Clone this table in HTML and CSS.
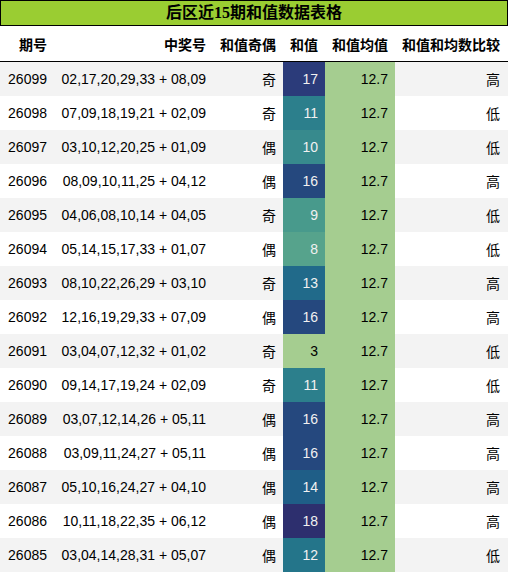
FILE: index.html
```html
<!DOCTYPE html>
<html lang="zh">
<head>
<meta charset="utf-8">
<title>后区近15期和值数据表格</title>
<link rel="stylesheet" href="styles.css">
</head>
<body>
<div class="title">后区近15期和值数据表格</div>
<table class="data">
  <colgroup>
    <col class="c1"><col class="c2"><col class="c3"><col class="c4"><col class="c5"><col class="c6">
  </colgroup>
  <thead>
    <tr><th>期号</th><th>中奖号</th><th>和值奇偶</th><th>和值</th><th>和值均值</th><th>和值和均数比较</th></tr>
  </thead>
  <tbody>
    <tr><td>26099</td><td>02,17,20,29,33 + 08,09</td><td class="cjk">奇</td><td class="sum s17">17</td><td class="mean">12.7</td><td class="cjk">高</td></tr>
    <tr><td>26098</td><td>07,09,18,19,21 + 02,09</td><td class="cjk">奇</td><td class="sum s11">11</td><td class="mean">12.7</td><td class="cjk">低</td></tr>
    <tr><td>26097</td><td>03,10,12,20,25 + 01,09</td><td class="cjk">偶</td><td class="sum s10">10</td><td class="mean">12.7</td><td class="cjk">低</td></tr>
    <tr><td>26096</td><td>08,09,10,11,25 + 04,12</td><td class="cjk">偶</td><td class="sum s16">16</td><td class="mean">12.7</td><td class="cjk">高</td></tr>
    <tr><td>26095</td><td>04,06,08,10,14 + 04,05</td><td class="cjk">奇</td><td class="sum s9">9</td><td class="mean">12.7</td><td class="cjk">低</td></tr>
    <tr><td>26094</td><td>05,14,15,17,33 + 01,07</td><td class="cjk">偶</td><td class="sum s8">8</td><td class="mean">12.7</td><td class="cjk">低</td></tr>
    <tr><td>26093</td><td>08,10,22,26,29 + 03,10</td><td class="cjk">奇</td><td class="sum s13">13</td><td class="mean">12.7</td><td class="cjk">高</td></tr>
    <tr><td>26092</td><td>12,16,19,29,33 + 07,09</td><td class="cjk">偶</td><td class="sum s16">16</td><td class="mean">12.7</td><td class="cjk">高</td></tr>
    <tr><td>26091</td><td>03,04,07,12,32 + 01,02</td><td class="cjk">奇</td><td class="sum s3">3</td><td class="mean">12.7</td><td class="cjk">低</td></tr>
    <tr><td>26090</td><td>09,14,17,19,24 + 02,09</td><td class="cjk">奇</td><td class="sum s11">11</td><td class="mean">12.7</td><td class="cjk">低</td></tr>
    <tr><td>26089</td><td>03,07,12,14,26 + 05,11</td><td class="cjk">偶</td><td class="sum s16">16</td><td class="mean">12.7</td><td class="cjk">高</td></tr>
    <tr><td>26088</td><td>03,09,11,24,27 + 05,11</td><td class="cjk">偶</td><td class="sum s16">16</td><td class="mean">12.7</td><td class="cjk">高</td></tr>
    <tr><td>26087</td><td>05,10,16,24,27 + 04,10</td><td class="cjk">偶</td><td class="sum s14">14</td><td class="mean">12.7</td><td class="cjk">高</td></tr>
    <tr><td>26086</td><td>10,11,18,22,35 + 06,12</td><td class="cjk">偶</td><td class="sum s18">18</td><td class="mean">12.7</td><td class="cjk">高</td></tr>
    <tr><td>26085</td><td>03,04,14,28,31 + 05,07</td><td class="cjk">偶</td><td class="sum s12">12</td><td class="mean">12.7</td><td class="cjk">低</td></tr>
  </tbody>
</table>
</body>
</html>
```
FILE: styles.css
```css
html, body {
  margin: 0;
  padding: 0;
  background: #ffffff;
}
body {
  width: 508px;
  font-family: "Liberation Sans", "Noto Sans CJK SC", sans-serif;
  font-size: 14px;
  color: #000;
}
.title {
  box-sizing: border-box;
  height: 26px;
  border: 1px solid #000;
  background: #9acd32;
  font-family: "Liberation Serif", "Noto Sans CJK SC", serif;
  font-weight: bold;
  font-size: 16px;
  line-height: 24px;
  text-align: center;
}
.data {
  width: 508px;
  border-collapse: collapse;
  table-layout: fixed;
}
.c1 { width: 54px; }
.c2 { width: 159px; }
.c3 { width: 70px; }
.c4 { width: 42px; }
.c5 { width: 70px; }
.c6 { width: 113px; }
.data th, .data td {
  padding: 0 7px;
  text-align: right;
  white-space: nowrap;
  overflow: hidden;
}
.data th {
  height: 35px;
  font-weight: bold;
  border-bottom: 1px solid #000;
  font-family: "Noto Sans CJK SC", sans-serif;
}
.data th:last-child, .data td:last-child {
  padding-right: 8px;
  padding-left: 6px;
}
.data td {
  height: 34px;
}
.data tbody tr:nth-child(odd) {
  background: #f3f3f3;
}
.data tbody tr:nth-child(even) {
  background: #ffffff;
}
.cjk {
  font-family: "Noto Sans CJK SC", sans-serif;
}
.sum {
  color: #f1f1f1;
}
.mean {
  background: #a5cd90;
  color: #000;
}
.s3 { background: #a5cd90; color: #000; }
.s8 { background: #56a38c; }
.s9 { background: #489a8c; }
.s10 { background: #378a8d; }
.s11 { background: #2c7f8c; }
.s12 { background: #24758a; }
.s13 { background: #216a8a; }
.s14 { background: #1f5e87; }
.s16 { background: #25487e; }
.s17 { background: #2b3b7a; }
.s18 { background: #2d2f6e; }
```
